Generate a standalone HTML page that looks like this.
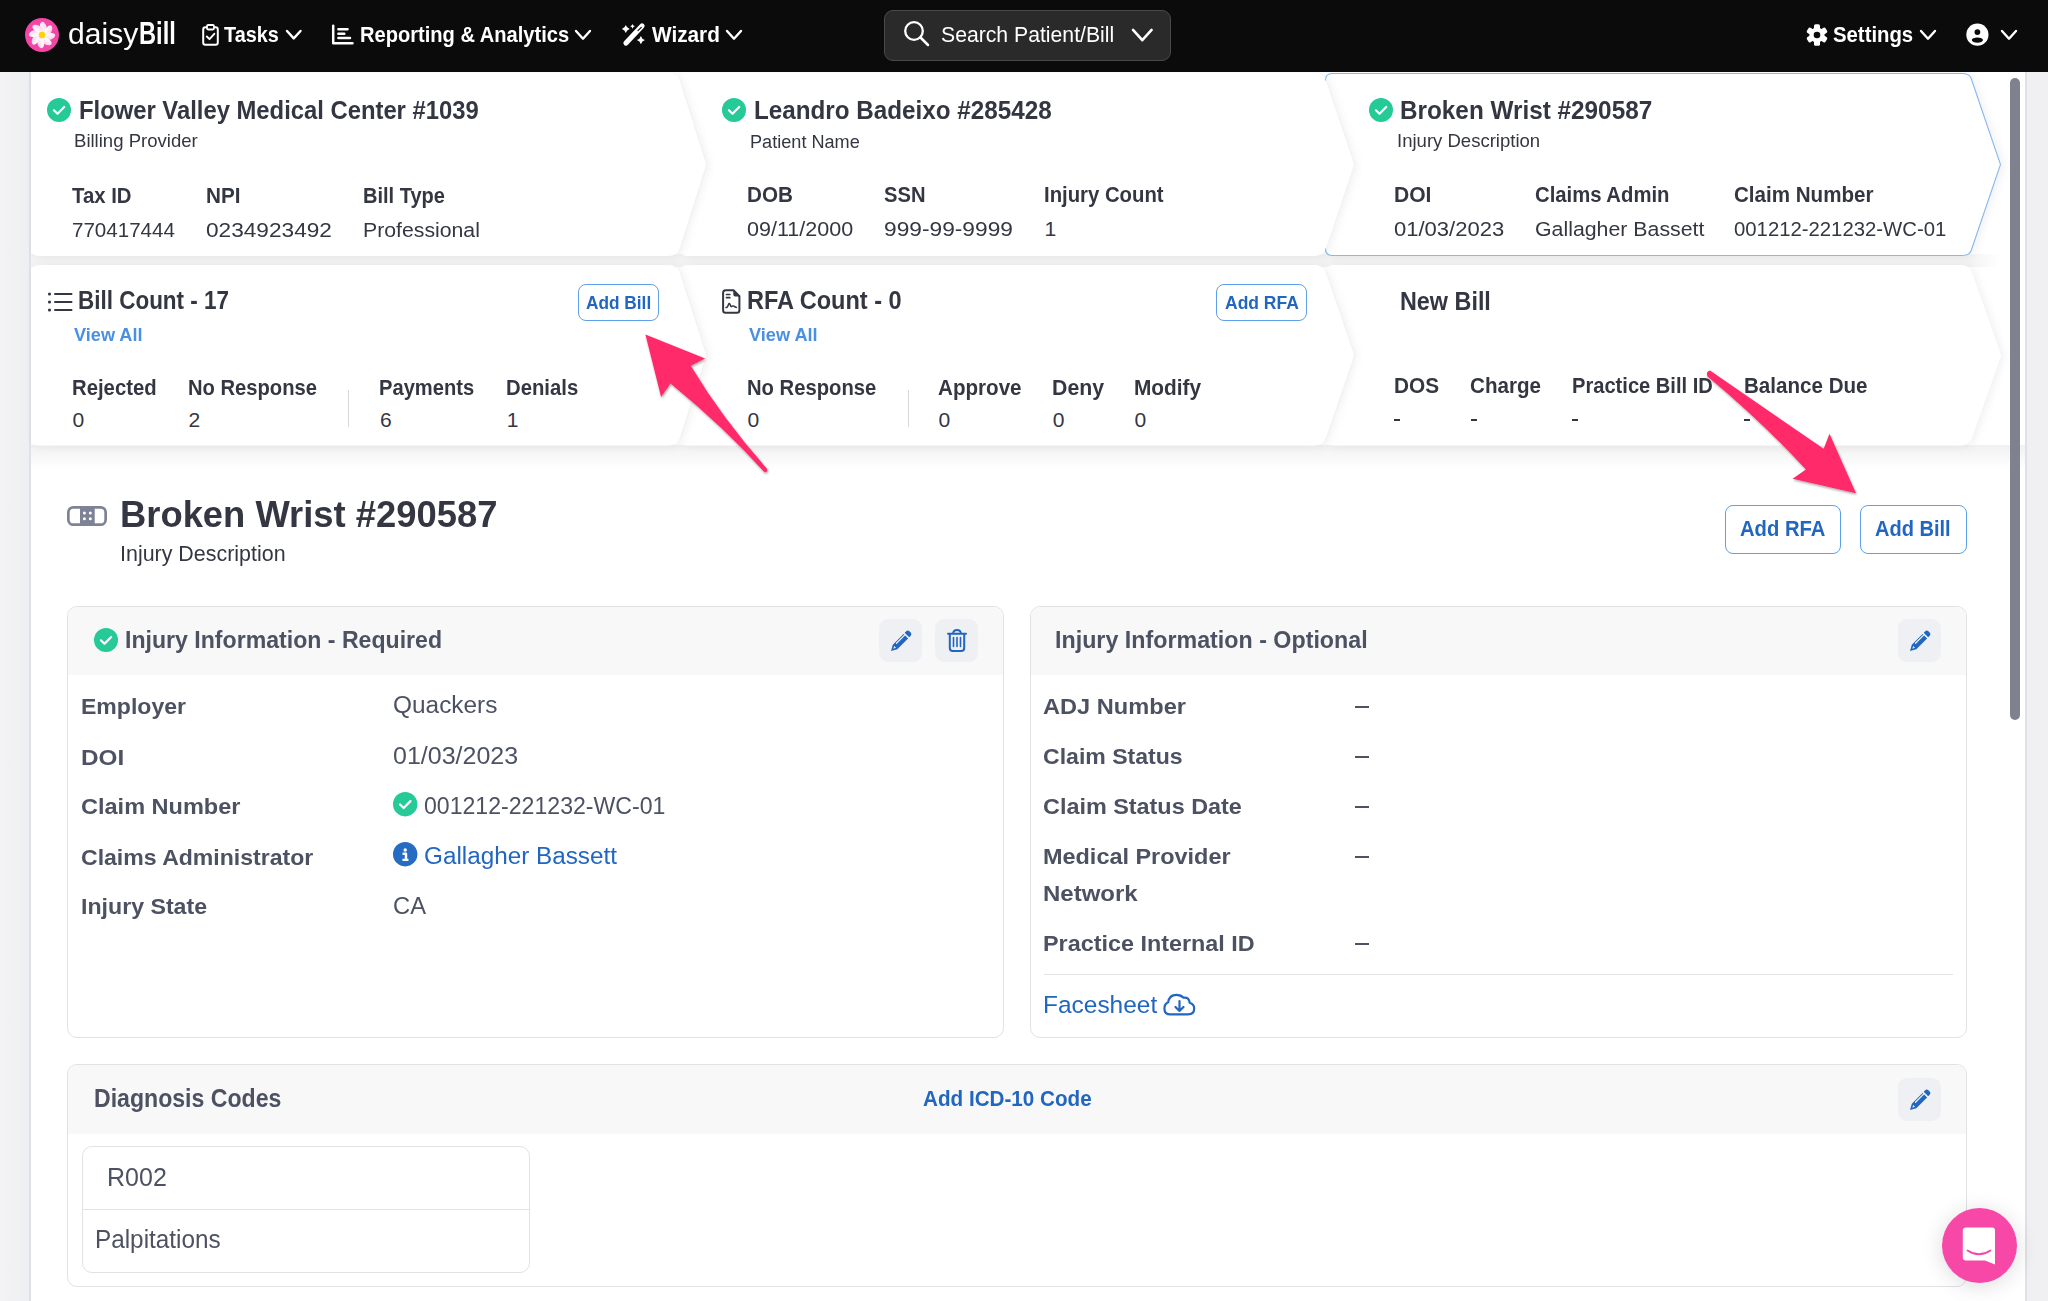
<!DOCTYPE html>
<html><head><meta charset="utf-8"><title>daisyBill</title>
<style>
html,body{margin:0;padding:0;}
body{width:2048px;height:1301px;position:relative;overflow:hidden;background:#fff;font-family:"Liberation Sans",sans-serif;}
.t{position:absolute;white-space:nowrap;}
.abs{position:absolute;}
svg{position:absolute;overflow:visible;}
</style></head><body>

<div class="abs" style="left:0;top:72px;width:29px;height:1229px;background:linear-gradient(90deg,#f3f3f5,#eeeff2)"></div>
<div class="abs" style="left:29px;top:72px;width:1.5px;height:1229px;background:#e0e1e6"></div>
<div class="abs" style="left:2025px;top:72px;width:1.5px;height:1229px;background:#e0e1e6"></div>
<div class="abs" style="left:2026.5px;top:72px;width:22px;height:1229px;background:#f0f0f3"></div>
<svg class="abs" style="left:0;top:0" width="2048" height="500" viewBox="0 0 2048 500">
<defs><filter id="sh" x="-5%" y="-20%" width="110%" height="140%"><feDropShadow dx="3" dy="1" stdDeviation="4" flood-color="#000" flood-opacity="0.06"/></filter>
<linearGradient id="bgr" x1="0" y1="0" x2="1" y2="0"><stop offset="0" stop-color="#f3f3f3"/><stop offset="1" stop-color="#ffffff"/></linearGradient><linearGradient id="bg2" x1="0" y1="0" x2="0" y2="1"><stop offset="0" stop-color="#f1f1f1"/><stop offset="1" stop-color="#ffffff"/></linearGradient></defs>
<rect x="31" y="254" width="1940" height="13" fill="#f3f3f3"/><rect x="1970" y="254" width="30" height="13" fill="url(#bgr)"/>
<rect x="31" y="445" width="1994" height="24" fill="url(#bg2)"/>
<path d="M1327.89,81.52 Q1325.00,73.00 1334.00,73.00 L1960.00,73.00 Q1969.00,73.00 1971.97,81.50 L2000.01,161.67 Q2001.00,164.50 2000.01,167.33 L1971.97,247.50 Q1969.00,256.00 1960.00,256.00 L1334.00,256.00 Q1325.00,256.00 1327.89,247.48 L1355.04,167.34 Q1356.00,164.50 1355.04,161.66 Z" fill="#fff" filter="url(#sh)"/>
<path d="M681.72,81.58 Q679.00,73.00 688.00,73.00 L1314.00,73.00 Q1323.00,73.00 1325.89,81.52 L1353.04,161.66 Q1354.00,164.50 1353.04,167.34 L1325.89,247.48 Q1323.00,256.00 1314.00,256.00 L688.00,256.00 Q679.00,256.00 681.72,247.42 L707.09,167.36 Q708.00,164.50 707.09,161.64 Z" fill="#fff" filter="url(#sh)"/>
<path d="M31.00,82.00 Q31.00,73.00 40.00,73.00 L668.00,73.00 Q677.00,73.00 679.72,81.58 L705.09,161.64 Q706.00,164.50 705.09,167.36 L679.72,247.42 Q677.00,256.00 668.00,256.00 L40.00,256.00 Q31.00,256.00 31.00,247.00 Z" fill="#fff" filter="url(#sh)"/>
<path d="M1327.92,273.51 Q1325.00,265.00 1334.00,265.00 L1960.00,265.00 Q1969.00,265.00 1972.01,273.48 L2000.00,352.42 Q2001.00,355.25 2000.00,358.08 L1972.01,437.02 Q1969.00,445.50 1960.00,445.50 L1334.00,445.50 Q1325.00,445.50 1327.92,436.99 L1355.03,358.09 Q1356.00,355.25 1355.03,352.41 Z" fill="#fff" filter="url(#sh)"/>
<path d="M681.75,273.57 Q679.00,265.00 688.00,265.00 L1314.00,265.00 Q1323.00,265.00 1325.92,273.51 L1353.03,352.41 Q1354.00,355.25 1353.03,358.09 L1325.92,436.99 Q1323.00,445.50 1314.00,445.50 L688.00,445.50 Q679.00,445.50 681.75,436.93 L707.08,358.11 Q708.00,355.25 707.08,352.39 Z" fill="#fff" filter="url(#sh)"/>
<path d="M31.00,274.00 Q31.00,265.00 40.00,265.00 L668.00,265.00 Q677.00,265.00 679.75,273.57 L705.08,352.39 Q706.00,355.25 705.08,358.11 L679.75,436.93 Q677.00,445.50 668.00,445.50 L40.00,445.50 Q31.00,445.50 31.00,436.50 Z" fill="#fff" filter="url(#sh)"/>
<path d="M1325.5,80.5 Q1325.5,73.5 1332,73.5 L1962,73.5 Q1969,73.5 1971,78 L1999.8,162.5 Q2001,164.5 1999.8,166.5 L1971,251 Q1969,255.5 1962,255.5 L1332,255.5 Q1325.5,255.5 1325.5,248.5" fill="none" stroke="#86b8ee" stroke-width="1.1"/>
</svg>
<div class="abs" style="left:2010px;top:78px;width:10px;height:642px;border-radius:5px;background:#7f828e"></div>
<div class="abs" style="left:0;top:0;width:2048px;height:72px;background:#0b0b0b"></div>
<div class="t" style="left:68.4px;top:19.6px;font-size:29.07px;line-height:29.07px;font-weight:400;color:#ffffff;transform:scaleX(1.0347);transform-origin:0 0;">daisy</div>
<div class="t" style="left:138.8px;top:19.0px;font-size:30.81px;line-height:30.81px;font-weight:700;color:#ffffff;transform:scaleX(0.7675);transform-origin:0 0;">Bill</div>
<div class="t" style="left:224.4px;top:23.9px;font-size:21.80px;line-height:21.80px;font-weight:700;color:#ffffff;transform:scaleX(0.9087);transform-origin:0 0;">Tasks</div>
<div class="t" style="left:359.7px;top:23.9px;font-size:21.80px;line-height:21.80px;font-weight:700;color:#ffffff;transform:scaleX(0.9218);transform-origin:0 0;">Reporting &amp; Analytics</div>
<div class="t" style="left:652.1px;top:23.9px;font-size:21.80px;line-height:21.80px;font-weight:700;color:#ffffff;transform:scaleX(0.9527);transform-origin:0 0;">Wizard</div>
<div class="t" style="left:1833.4px;top:23.9px;font-size:21.80px;line-height:21.80px;font-weight:700;color:#ffffff;transform:scaleX(0.9324);transform-origin:0 0;">Settings</div>

<div class="abs" style="left:884px;top:9.5px;width:285px;height:49px;border:1px solid #4a4a4a;border-radius:9px;background:#2a2a2a"></div>
<div class="t" style="left:941.0px;top:23.8px;font-size:22.09px;line-height:22.09px;font-weight:400;color:#ffffff;transform:scaleX(0.9600);transform-origin:0 0;">Search Patient/Bill</div>

<svg style="left:285px;top:28.7875px" width="17.5" height="11.425" viewBox="-2 -2 17.5 11.425"><path d="M0,0 L6.75,7.425000000000001 L13.5,0" fill="none" stroke="#ffffff" stroke-width="2.4" stroke-linecap="round" stroke-linejoin="round"/></svg>
<svg style="left:574px;top:28.65px" width="18" height="11.700000000000001" viewBox="-2 -2 18 11.700000000000001"><path d="M0,0 L7.0,7.700000000000001 L14,0" fill="none" stroke="#ffffff" stroke-width="2.4" stroke-linecap="round" stroke-linejoin="round"/></svg>
<svg style="left:725.4px;top:28.65px" width="18.0" height="11.700000000000001" viewBox="-2 -2 18.0 11.700000000000001"><path d="M0,0 L7.0,7.700000000000001 L14.0,0" fill="none" stroke="#ffffff" stroke-width="2.4" stroke-linecap="round" stroke-linejoin="round"/></svg>
<svg style="left:1131px;top:27.685000000000024px" width="22.59999999999991" height="14.22999999999995" viewBox="-2 -2 22.59999999999991 14.22999999999995"><path d="M0,0 L9.299999999999955,10.22999999999995 L18.59999999999991,0" fill="none" stroke="#ffffff" stroke-width="2.6" stroke-linecap="round" stroke-linejoin="round"/></svg>
<svg style="left:1919px;top:28.65px" width="18" height="11.700000000000001" viewBox="-2 -2 18 11.700000000000001"><path d="M0,0 L7.0,7.700000000000001 L14,0" fill="none" stroke="#ffffff" stroke-width="2.4" stroke-linecap="round" stroke-linejoin="round"/></svg>
<svg style="left:2000px;top:28.65px" width="18" height="11.700000000000001" viewBox="-2 -2 18 11.700000000000001"><path d="M0,0 L7.0,7.700000000000001 L14,0" fill="none" stroke="#ffffff" stroke-width="2.4" stroke-linecap="round" stroke-linejoin="round"/></svg>
<svg style="left:25px;top:18px" width="34" height="34" viewBox="0 0 34 34">
<defs><linearGradient id="pet" x1="0" y1="0" x2="1" y2="0"><stop offset="0" stop-color="#fff"/><stop offset="1" stop-color="#fbd3ea"/></linearGradient></defs>
<circle cx="17" cy="17" r="17" fill="#f346a5"/>
<g transform="translate(17,17)">
<ellipse cx="1.6" cy="-7.4" rx="3.2" ry="6" fill="url(#pet)" transform="rotate(0) rotate(-18 1.6 -7.4)"/><ellipse cx="1.6" cy="-7.4" rx="3.2" ry="6" fill="url(#pet)" transform="rotate(45) rotate(-18 1.6 -7.4)"/><ellipse cx="1.6" cy="-7.4" rx="3.2" ry="6" fill="url(#pet)" transform="rotate(90) rotate(-18 1.6 -7.4)"/><ellipse cx="1.6" cy="-7.4" rx="3.2" ry="6" fill="url(#pet)" transform="rotate(135) rotate(-18 1.6 -7.4)"/><ellipse cx="1.6" cy="-7.4" rx="3.2" ry="6" fill="url(#pet)" transform="rotate(180) rotate(-18 1.6 -7.4)"/><ellipse cx="1.6" cy="-7.4" rx="3.2" ry="6" fill="url(#pet)" transform="rotate(225) rotate(-18 1.6 -7.4)"/><ellipse cx="1.6" cy="-7.4" rx="3.2" ry="6" fill="url(#pet)" transform="rotate(270) rotate(-18 1.6 -7.4)"/><ellipse cx="1.6" cy="-7.4" rx="3.2" ry="6" fill="url(#pet)" transform="rotate(315) rotate(-18 1.6 -7.4)"/>
</g>
<circle cx="17" cy="17" r="3.2" fill="#ffd400"/>
</svg>
<svg style="left:202px;top:24px" width="17" height="22" viewBox="0 0 17 22">
<rect x="1.2" y="3.2" width="14.6" height="17.6" rx="2.2" fill="none" stroke="#fff" stroke-width="2"/>
<rect x="5" y="1" width="7" height="4.5" rx="1.2" fill="#0b0b0b" stroke="#fff" stroke-width="1.8"/>
<path d="M4.8,12.5 L7.5,15.2 L12.3,9.8" fill="none" stroke="#fff" stroke-width="1.9" stroke-linecap="round" stroke-linejoin="round"/>
</svg>
<svg style="left:331px;top:24px" width="23" height="21" viewBox="0 0 23 21">
<path d="M2.2,1.8 V19.2 H21.5" fill="none" stroke="#fff" stroke-width="2.5" stroke-linecap="round" stroke-linejoin="round"/>
<path d="M7.4,5.3 H16.5 M7.4,9.7 H13.3 M7.4,13.9 H19" fill="none" stroke="#fff" stroke-width="2.5" stroke-linecap="round"/>
</svg>
<svg style="left:621px;top:23px" width="25" height="23" viewBox="0 0 25 23">
<path d="M5,20 L21,3" fill="none" stroke="#fff" stroke-width="5.2" stroke-linecap="round"/>
<path d="M17,7.7 L20.3,4.3" stroke="#0b0b0b" stroke-width="1.1" stroke-linecap="round"/>
<path d="M4.8,2.1 Q5.6579999999999995,5.142 8.7,6 Q5.6579999999999995,6.858 4.8,9.9 Q3.9419999999999997,6.858 0.8999999999999999,6 Q3.9419999999999997,5.142 4.8,2.1 Z M11.5,0.8999999999999999 Q12.028,2.772 13.9,3.3 Q12.028,3.828 11.5,5.699999999999999 Q10.972,3.828 9.1,3.3 Q10.972,2.772 11.5,0.8999999999999999 Z M19.9,13.000000000000002 Q20.802,16.198 24.0,17.1 Q20.802,18.002000000000002 19.9,21.200000000000003 Q18.997999999999998,18.002000000000002 15.799999999999999,17.1 Q18.997999999999998,16.198 19.9,13.000000000000002 Z" fill="#fff"/>
</svg>
<svg style="left:903px;top:20px" width="28" height="28" viewBox="0 0 28 28">
<circle cx="11" cy="11" r="8.8" fill="none" stroke="#fff" stroke-width="2.3"/>
<path d="M17.5,17.5 L25,25" stroke="#fff" stroke-width="2.5" stroke-linecap="round"/>
</svg>
<svg style="left:1806px;top:23.5px" width="22" height="22" viewBox="0 0 22 22">
<g transform="translate(11,11)" fill="#fff">
<circle r="7.6"/>
<rect x="-3" y="-10.8" width="6" height="6" rx="1.6" transform="rotate(0)"/><rect x="-3" y="-10.8" width="6" height="6" rx="1.6" transform="rotate(60)"/><rect x="-3" y="-10.8" width="6" height="6" rx="1.6" transform="rotate(120)"/><rect x="-3" y="-10.8" width="6" height="6" rx="1.6" transform="rotate(180)"/><rect x="-3" y="-10.8" width="6" height="6" rx="1.6" transform="rotate(240)"/><rect x="-3" y="-10.8" width="6" height="6" rx="1.6" transform="rotate(300)"/>
</g>
<circle cx="11" cy="11" r="3.3" fill="#0b0b0b"/>
</svg>
<svg style="left:1966px;top:23px" width="23" height="23" viewBox="0 0 23 23">
<circle cx="11.4" cy="11.7" r="11.1" fill="#fff"/>
<circle cx="11.4" cy="9.1" r="2.9" fill="#0b0b0b"/>
<ellipse cx="11.4" cy="17.1" rx="5.6" ry="2.7" fill="#0b0b0b"/>
</svg>
<svg style="left:47.2px;top:98.0px" width="24" height="24" viewBox="0 0 24 24"><circle cx="12" cy="12" r="12" fill="#25ca97"/><path d="M6.9,12.3 L10.5,15.7 L17.2,9" fill="none" stroke="#fff" stroke-width="2.2" stroke-linecap="round" stroke-linejoin="round"/></svg>
<svg style="left:722.2px;top:98.3px" width="24" height="24" viewBox="0 0 24 24"><circle cx="12" cy="12" r="12" fill="#25ca97"/><path d="M6.9,12.3 L10.5,15.7 L17.2,9" fill="none" stroke="#fff" stroke-width="2.2" stroke-linecap="round" stroke-linejoin="round"/></svg>
<svg style="left:1369.2px;top:98.3px" width="24" height="24" viewBox="0 0 24 24"><circle cx="12" cy="12" r="12" fill="#25ca97"/><path d="M6.9,12.3 L10.5,15.7 L17.2,9" fill="none" stroke="#fff" stroke-width="2.2" stroke-linecap="round" stroke-linejoin="round"/></svg>
<div class="t" style="left:78.7px;top:99.0px;font-size:24.85px;line-height:24.85px;font-weight:700;color:#343742;transform:scaleX(0.9585);transform-origin:0 0;">Flower Valley Medical Center #1039</div>
<div class="t" style="left:74.3px;top:132.7px;font-size:17.88px;line-height:17.88px;font-weight:400;color:#343742;transform:scaleX(1.0390);transform-origin:0 0;">Billing Provider</div>
<div class="t" style="left:72.0px;top:185.8px;font-size:21.51px;line-height:21.51px;font-weight:700;color:#343742;transform:scaleX(0.9466);transform-origin:0 0;">Tax ID</div>
<div class="t" style="left:205.6px;top:185.8px;font-size:21.51px;line-height:21.51px;font-weight:700;color:#343742;transform:scaleX(0.9621);transform-origin:0 0;">NPI</div>
<div class="t" style="left:362.9px;top:185.8px;font-size:21.51px;line-height:21.51px;font-weight:700;color:#343742;transform:scaleX(0.9313);transform-origin:0 0;">Bill Type</div>
<div class="t" style="left:72.0px;top:218.5px;font-size:21.08px;line-height:21.08px;font-weight:400;color:#343742;transform:scaleX(0.9755);transform-origin:0 0;">770417444</div>
<div class="t" style="left:205.6px;top:218.5px;font-size:21.08px;line-height:21.08px;font-weight:400;color:#343742;transform:scaleX(1.0740);transform-origin:0 0;">0234923492</div>
<div class="t" style="left:362.8px;top:218.5px;font-size:21.08px;line-height:21.08px;font-weight:400;color:#343742;transform:scaleX(1.0079);transform-origin:0 0;">Professional</div>
<div class="t" style="left:753.6px;top:98.6px;font-size:24.85px;line-height:24.85px;font-weight:700;color:#343742;transform:scaleX(0.9754);transform-origin:0 0;">Leandro Badeixo #285428</div>
<div class="t" style="left:749.9px;top:133.5px;font-size:17.88px;line-height:17.88px;font-weight:400;color:#343742;transform:scaleX(1.0146);transform-origin:0 0;">Patient Name</div>
<div class="t" style="left:747.0px;top:185.4px;font-size:21.51px;line-height:21.51px;font-weight:700;color:#343742;transform:scaleX(0.9603);transform-origin:0 0;">DOB</div>
<div class="t" style="left:884.2px;top:185.4px;font-size:21.51px;line-height:21.51px;font-weight:700;color:#343742;transform:scaleX(0.9383);transform-origin:0 0;">SSN</div>
<div class="t" style="left:1044.1px;top:185.4px;font-size:21.51px;line-height:21.51px;font-weight:700;color:#343742;transform:scaleX(0.9443);transform-origin:0 0;">Injury Count</div>
<div class="t" style="left:747.0px;top:218.0px;font-size:21.08px;line-height:21.08px;font-weight:400;color:#343742;transform:scaleX(1.0219);transform-origin:0 0;">09/11/2000</div>
<div class="t" style="left:884.2px;top:218.0px;font-size:21.08px;line-height:21.08px;font-weight:400;color:#343742;transform:scaleX(1.0785);transform-origin:0 0;">999-99-9999</div>
<div class="t" style="left:1044.5px;top:218.0px;font-size:21.08px;line-height:21.08px;font-weight:400;color:#343742;">1</div>
<div class="t" style="left:1399.8px;top:98.6px;font-size:24.85px;line-height:24.85px;font-weight:700;color:#343742;transform:scaleX(0.9783);transform-origin:0 0;">Broken Wrist #290587</div>
<div class="t" style="left:1396.6px;top:133.1px;font-size:17.88px;line-height:17.88px;font-weight:400;color:#343742;transform:scaleX(1.0376);transform-origin:0 0;">Injury Description</div>
<div class="t" style="left:1394.0px;top:185.4px;font-size:21.51px;line-height:21.51px;font-weight:700;color:#343742;transform:scaleX(0.9805);transform-origin:0 0;">DOI</div>
<div class="t" style="left:1534.6px;top:185.4px;font-size:21.51px;line-height:21.51px;font-weight:700;color:#343742;transform:scaleX(0.9429);transform-origin:0 0;">Claims Admin</div>
<div class="t" style="left:1734.4px;top:185.4px;font-size:21.51px;line-height:21.51px;font-weight:700;color:#343742;transform:scaleX(0.9566);transform-origin:0 0;">Claim Number</div>
<div class="t" style="left:1394.0px;top:218.0px;font-size:21.08px;line-height:21.08px;font-weight:400;color:#343742;transform:scaleX(1.0447);transform-origin:0 0;">01/03/2023</div>
<div class="t" style="left:1534.6px;top:218.0px;font-size:21.08px;line-height:21.08px;font-weight:400;color:#343742;transform:scaleX(1.0112);transform-origin:0 0;">Gallagher Bassett</div>
<div class="t" style="left:1734.4px;top:218.0px;font-size:21.08px;line-height:21.08px;font-weight:400;color:#343742;transform:scaleX(0.9634);transform-origin:0 0;">001212-221232-WC-01</div>

<svg style="left:47px;top:291px" width="26" height="22" viewBox="0 0 26 22">
<g fill="#343742"><circle cx="2.5" cy="3" r="1.6"/><circle cx="2.5" cy="11" r="1.6"/><circle cx="2.5" cy="19" r="1.6"/></g>
<path d="M8,3 H24.5 M8,11 H24.5 M8,19 H24.5" stroke="#343742" stroke-width="2" stroke-linecap="round"/>
</svg>
<div class="abs" style="left:577.5px;top:284px;width:79.5px;height:34.5px;border:1.5px solid #5e9fea;border-radius:8px"></div>
<div class="abs" style="left:348px;top:390px;width:1px;height:37px;background:#d5d6da"></div>
<svg style="left:720px;top:289px" width="22" height="26" viewBox="0 0 22 26">
<path d="M5.6,1.3 H13.5 L19.4,7.2 V21.3 Q19.4,23.8 16.9,23.8 H5.6 Q3.1,23.8 3.1,21.3 V3.8 Q3.1,1.3 5.6,1.3 Z" fill="none" stroke="#343742" stroke-width="2"/>
<path d="M13.3,1.3 L19.6,7.6 H15.3 Q13.3,7.6 13.3,5.6 Z" fill="#343742"/>
<path d="M6.5,5.5 H9.8 M6.5,8.7 H9.8" stroke="#343742" stroke-width="1.7" stroke-linecap="round"/>
<path d="M6,18.6 Q7.5,18.6 8.5,15.5 Q9.3,13.2 10.2,15.6 Q10.8,18 11.7,17.5 Q12.6,16.5 14,17.2 Q15.2,18.2 16.4,18.4" fill="none" stroke="#343742" stroke-width="1.5" stroke-linecap="round"/>
</svg>
<div class="abs" style="left:1215.5px;top:284px;width:89.5px;height:34.5px;border:1.5px solid #5e9fea;border-radius:8px"></div>
<div class="abs" style="left:907.5px;top:390px;width:1px;height:37px;background:#d5d6da"></div>
<div class="abs" style="left:1394px;top:419px;width:6px;height:2px;background:#343742"></div>
<div class="abs" style="left:1471px;top:419px;width:6px;height:2px;background:#343742"></div>
<div class="abs" style="left:1572px;top:419px;width:6px;height:2px;background:#343742"></div>
<div class="abs" style="left:1744px;top:419px;width:6px;height:2px;background:#343742"></div>
<div class="t" style="left:78.2px;top:289.4px;font-size:24.85px;line-height:24.85px;font-weight:700;color:#343742;transform:scaleX(0.9044);transform-origin:0 0;">Bill Count - 17</div>
<div class="t" style="left:74.4px;top:325.6px;font-size:18.31px;line-height:18.31px;font-weight:700;color:#4a90e2;transform:scaleX(0.9912);transform-origin:0 0;">View All</div>
<div class="t" style="left:586.4px;top:294.4px;font-size:18.60px;line-height:18.60px;font-weight:700;color:#2166c0;transform:scaleX(0.9279);transform-origin:0 0;">Add Bill</div>
<div class="t" style="left:71.9px;top:377.6px;font-size:21.51px;line-height:21.51px;font-weight:700;color:#343742;transform:scaleX(0.9447);transform-origin:0 0;">Rejected</div>
<div class="t" style="left:188.0px;top:377.6px;font-size:21.51px;line-height:21.51px;font-weight:700;color:#343742;transform:scaleX(0.9385);transform-origin:0 0;">No Response</div>
<div class="t" style="left:379.4px;top:377.6px;font-size:21.51px;line-height:21.51px;font-weight:700;color:#343742;transform:scaleX(0.9366);transform-origin:0 0;">Payments</div>
<div class="t" style="left:506.1px;top:377.6px;font-size:21.51px;line-height:21.51px;font-weight:700;color:#343742;transform:scaleX(0.9436);transform-origin:0 0;">Denials</div>
<div class="t" style="left:72.5px;top:408.9px;font-size:21.08px;line-height:21.08px;font-weight:400;color:#343742;">0</div>
<div class="t" style="left:188.6px;top:408.9px;font-size:21.08px;line-height:21.08px;font-weight:400;color:#343742;">2</div>
<div class="t" style="left:380.0px;top:408.9px;font-size:21.08px;line-height:21.08px;font-weight:400;color:#343742;">6</div>
<div class="t" style="left:506.7px;top:408.9px;font-size:21.08px;line-height:21.08px;font-weight:400;color:#343742;">1</div>
<div class="t" style="left:747.2px;top:289.4px;font-size:24.85px;line-height:24.85px;font-weight:700;color:#343742;transform:scaleX(0.9469);transform-origin:0 0;">RFA Count - 0</div>
<div class="t" style="left:749.4px;top:325.6px;font-size:18.31px;line-height:18.31px;font-weight:700;color:#4a90e2;transform:scaleX(0.9927);transform-origin:0 0;">View All</div>
<div class="t" style="left:1224.7px;top:294.4px;font-size:18.60px;line-height:18.60px;font-weight:700;color:#2166c0;transform:scaleX(0.9408);transform-origin:0 0;">Add RFA</div>
<div class="t" style="left:746.9px;top:377.6px;font-size:21.51px;line-height:21.51px;font-weight:700;color:#343742;transform:scaleX(0.9406);transform-origin:0 0;">No Response</div>
<div class="t" style="left:938.0px;top:377.6px;font-size:21.51px;line-height:21.51px;font-weight:700;color:#343742;transform:scaleX(0.9582);transform-origin:0 0;">Approve</div>
<div class="t" style="left:1052.1px;top:377.6px;font-size:21.51px;line-height:21.51px;font-weight:700;color:#343742;transform:scaleX(0.9906);transform-origin:0 0;">Deny</div>
<div class="t" style="left:1133.9px;top:377.6px;font-size:21.51px;line-height:21.51px;font-weight:700;color:#343742;transform:scaleX(0.9696);transform-origin:0 0;">Modify</div>
<div class="t" style="left:747.5px;top:408.9px;font-size:21.08px;line-height:21.08px;font-weight:400;color:#343742;">0</div>
<div class="t" style="left:938.6px;top:408.9px;font-size:21.08px;line-height:21.08px;font-weight:400;color:#343742;">0</div>
<div class="t" style="left:1052.7px;top:408.9px;font-size:21.08px;line-height:21.08px;font-weight:400;color:#343742;">0</div>
<div class="t" style="left:1134.5px;top:408.9px;font-size:21.08px;line-height:21.08px;font-weight:400;color:#343742;">0</div>
<div class="t" style="left:1400.2px;top:289.5px;font-size:24.85px;line-height:24.85px;font-weight:700;color:#343742;transform:scaleX(0.9402);transform-origin:0 0;">New Bill</div>
<div class="t" style="left:1393.9px;top:375.6px;font-size:21.51px;line-height:21.51px;font-weight:700;color:#343742;transform:scaleX(0.9675);transform-origin:0 0;">DOS</div>
<div class="t" style="left:1470.1px;top:375.6px;font-size:21.51px;line-height:21.51px;font-weight:700;color:#343742;transform:scaleX(0.9581);transform-origin:0 0;">Charge</div>
<div class="t" style="left:1571.6px;top:375.6px;font-size:21.51px;line-height:21.51px;font-weight:700;color:#343742;transform:scaleX(0.9353);transform-origin:0 0;">Practice Bill ID</div>
<div class="t" style="left:1743.8px;top:375.6px;font-size:21.51px;line-height:21.51px;font-weight:700;color:#343742;transform:scaleX(0.9573);transform-origin:0 0;">Balance Due</div>

<svg style="left:67px;top:506px" width="40" height="20" viewBox="0 0 40 20">
<rect x="1.35" y="1.35" width="37.3" height="17.3" rx="5" fill="none" stroke="#7d8296" stroke-width="2.7"/>
<rect x="13" y="0" width="14.7" height="20" fill="#7d8296"/>
<g fill="#fff"><circle cx="17.4" cy="6.9" r="1.5"/><circle cx="23.3" cy="6.9" r="1.5"/><circle cx="17.4" cy="12.7" r="1.5"/><circle cx="23.3" cy="12.7" r="1.5"/></g>
</svg>
<div class="abs" style="left:1724.5px;top:504.5px;width:114px;height:47px;border:1.6px solid #5e9fea;border-radius:8px"></div>
<div class="abs" style="left:1860px;top:504.5px;width:104.5px;height:47px;border:1.6px solid #5e9fea;border-radius:8px"></div>
<div class="t" style="left:120.0px;top:496.1px;font-size:37.79px;line-height:37.79px;font-weight:700;color:#343742;transform:scaleX(0.9627);transform-origin:0 0;">Broken Wrist #290587</div>
<div class="t" style="left:119.6px;top:543.0px;font-size:21.22px;line-height:21.22px;font-weight:400;color:#343742;transform:scaleX(1.0102);transform-origin:0 0;">Injury Description</div>
<div class="t" style="left:1740.1px;top:519.3px;font-size:21.37px;line-height:21.37px;font-weight:700;color:#2166c0;transform:scaleX(0.9467);transform-origin:0 0;">Add RFA</div>
<div class="t" style="left:1875.0px;top:519.3px;font-size:21.37px;line-height:21.37px;font-weight:700;color:#2166c0;transform:scaleX(0.9368);transform-origin:0 0;">Add Bill</div>

<div class="abs" style="left:67px;top:605.5px;width:937px;height:432.0px;box-sizing:border-box;border:1.3px solid #e1e2e6;border-radius:10px;background:#fff;overflow:hidden"><div style="position:absolute;left:0;top:0;right:0;height:68.5px;background:#f8f8f9"></div></div>
<div class="abs" style="left:1030px;top:605.5px;width:937px;height:432.0px;box-sizing:border-box;border:1.3px solid #e1e2e6;border-radius:10px;background:#fff;overflow:hidden"><div style="position:absolute;left:0;top:0;right:0;height:68.5px;background:#f8f8f9"></div></div>
<div class="abs" style="left:67px;top:1064px;width:1900px;height:223px;box-sizing:border-box;border:1.3px solid #e1e2e6;border-radius:10px;background:#fff;overflow:hidden"><div style="position:absolute;left:0;top:0;right:0;height:69px;background:#f8f8f9"></div></div>
<div class="abs" style="left:879px;top:619px;width:43px;height:43px;border-radius:9px;background:#eff0f3"></div>
<div class="abs" style="left:935px;top:619px;width:43px;height:43px;border-radius:9px;background:#eff0f3"></div>
<svg style="left:890px;top:629px" width="23" height="23" viewBox="0 0 23 23">
<path d="M16.2,2.3 Q17.8,0.7 19.4,2.3 L20.7,3.6 Q22.3,5.2 20.7,6.8 L19.2,8.3 L14.7,3.8 Z" fill="#2166c0"/>
<path d="M13.6,4.9 L18.1,9.4 L7.3,20.2 L1,22 L2.8,15.7 Z" fill="#2166c0"/>
<path d="M4.2,17 L3.3,19.7 L6,18.8 Z" fill="#eff0f3"/>
<path d="M6.5,14.2 L14.6,6.1" stroke="#eff0f3" stroke-width="1.3" stroke-linecap="round"/>
</svg>
<svg style="left:947px;top:629px" width="20" height="23" viewBox="0 0 20 23">
<path d="M1,4.8 H19" stroke="#2166c0" stroke-width="2" stroke-linecap="round"/>
<path d="M6,4.5 Q6.5,1 10,1 Q13.5,1 14,4.5" fill="none" stroke="#2166c0" stroke-width="1.9"/>
<path d="M2.8,5 V19 Q2.8,22 5.8,22 H14.2 Q17.2,22 17.2,19 V5" fill="none" stroke="#2166c0" stroke-width="2"/>
<path d="M6.5,8.5 V17.5 M10,8.5 V17.5 M13.5,8.5 V17.5" stroke="#2166c0" stroke-width="1.6" stroke-linecap="round"/>
</svg>
<svg style="left:94.0px;top:627.5px" width="24" height="24" viewBox="0 0 24 24"><circle cx="12" cy="12" r="12" fill="#25ca97"/><path d="M6.9,12.3 L10.5,15.7 L17.2,9" fill="none" stroke="#fff" stroke-width="2.2" stroke-linecap="round" stroke-linejoin="round"/></svg>
<svg style="left:392.8px;top:791.9px" width="24.4" height="24.4" viewBox="0 0 24 24"><circle cx="12" cy="12" r="12" fill="#25ca97"/><path d="M6.9,12.3 L10.5,15.7 L17.2,9" fill="none" stroke="#fff" stroke-width="2.2" stroke-linecap="round" stroke-linejoin="round"/></svg>
<svg style="left:392.8px;top:841.9px" width="24.4" height="24.4" viewBox="0 0 24 24"><circle cx="12" cy="12" r="12" fill="#256cc2"/><circle cx="12" cy="7.9" r="1.7" fill="#fff"/><path d="M9.4,11.6 H12.8 V17.4 M9.3,17.6 H15.2" fill="none" stroke="#fff" stroke-width="2.4" stroke-linejoin="round"/></svg>
<div class="abs" style="left:1897.5px;top:619px;width:43px;height:43px;border-radius:9px;background:#eff0f3"></div>
<svg style="left:1908.5px;top:629px" width="23" height="23" viewBox="0 0 23 23">
<path d="M16.2,2.3 Q17.8,0.7 19.4,2.3 L20.7,3.6 Q22.3,5.2 20.7,6.8 L19.2,8.3 L14.7,3.8 Z" fill="#2166c0"/>
<path d="M13.6,4.9 L18.1,9.4 L7.3,20.2 L1,22 L2.8,15.7 Z" fill="#2166c0"/>
<path d="M4.2,17 L3.3,19.7 L6,18.8 Z" fill="#eff0f3"/>
<path d="M6.5,14.2 L14.6,6.1" stroke="#eff0f3" stroke-width="1.3" stroke-linecap="round"/>
</svg>
<div class="abs" style="left:1355px;top:706px;width:14px;height:2px;background:#4d5263"></div>
<div class="abs" style="left:1355px;top:756px;width:14px;height:2px;background:#4d5263"></div>
<div class="abs" style="left:1355px;top:806px;width:14px;height:2px;background:#4d5263"></div>
<div class="abs" style="left:1355px;top:856px;width:14px;height:2px;background:#4d5263"></div>
<div class="abs" style="left:1355px;top:943px;width:14px;height:2px;background:#4d5263"></div>
<div class="abs" style="left:1043.5px;top:974px;width:909.5px;height:1.3px;background:#e1e2e6"></div>
<svg style="left:1163px;top:993px" width="33" height="24" viewBox="0 0 33 24">
<path d="M7.5,21.4 H25 Q31.2,21.4 31.2,15.6 Q31.2,11.2 26.6,9.8 Q26.2,3.9 20.6,4.7 Q17.8,1.8 13.4,1.8 Q6.2,1.8 5.2,9.3 Q1.4,11 1.4,15.4 Q1.4,21.4 7.5,21.4 Z" fill="none" stroke="#2166c0" stroke-width="2.2" stroke-linejoin="round"/>
<path d="M16.5,8 V18 M12.5,14 L16.5,18 L20.5,14" fill="none" stroke="#2166c0" stroke-width="2.2" stroke-linecap="round" stroke-linejoin="round"/>
</svg>
<div class="abs" style="left:1897.5px;top:1078px;width:43px;height:43px;border-radius:9px;background:#eff0f3"></div>
<svg style="left:1908.5px;top:1088px" width="23" height="23" viewBox="0 0 23 23">
<path d="M16.2,2.3 Q17.8,0.7 19.4,2.3 L20.7,3.6 Q22.3,5.2 20.7,6.8 L19.2,8.3 L14.7,3.8 Z" fill="#2166c0"/>
<path d="M13.6,4.9 L18.1,9.4 L7.3,20.2 L1,22 L2.8,15.7 Z" fill="#2166c0"/>
<path d="M4.2,17 L3.3,19.7 L6,18.8 Z" fill="#eff0f3"/>
<path d="M6.5,14.2 L14.6,6.1" stroke="#eff0f3" stroke-width="1.3" stroke-linecap="round"/>
</svg>
<div class="abs" style="left:81.5px;top:1146px;width:448.5px;height:127px;box-sizing:border-box;border:1.3px solid #e1e2e6;border-radius:10px;background:#fff"></div>
<div class="abs" style="left:82px;top:1209px;width:447.5px;height:1.3px;background:#e1e2e6"></div>
<div class="t" style="left:125.2px;top:628.3px;font-size:24.56px;line-height:24.56px;font-weight:700;color:#4d5263;transform:scaleX(0.9413);transform-origin:0 0;">Injury Information - Required</div>
<div class="t" style="left:81.4px;top:694.9px;font-size:22.82px;line-height:22.82px;font-weight:700;color:#4d5263;transform:scaleX(1.0097);transform-origin:0 0;">Employer</div>
<div class="t" style="left:81.4px;top:746.2px;font-size:22.82px;line-height:22.82px;font-weight:700;color:#4d5263;transform:scaleX(1.0647);transform-origin:0 0;">DOI</div>
<div class="t" style="left:81.4px;top:795.3px;font-size:22.82px;line-height:22.82px;font-weight:700;color:#4d5263;transform:scaleX(1.0311);transform-origin:0 0;">Claim Number</div>
<div class="t" style="left:81.4px;top:845.9px;font-size:22.82px;line-height:22.82px;font-weight:700;color:#4d5263;transform:scaleX(1.0103);transform-origin:0 0;">Claims Administrator</div>
<div class="t" style="left:81.4px;top:895.3px;font-size:22.82px;line-height:22.82px;font-weight:700;color:#4d5263;transform:scaleX(1.0147);transform-origin:0 0;">Injury State</div>
<div class="t" style="left:393.0px;top:693.1px;font-size:23.98px;line-height:23.98px;font-weight:400;color:#4d5263;transform:scaleX(1.0183);transform-origin:0 0;">Quackers</div>
<div class="t" style="left:393.2px;top:744.4px;font-size:23.98px;line-height:23.98px;font-weight:400;color:#4d5263;transform:scaleX(1.0430);transform-origin:0 0;">01/03/2023</div>
<div class="t" style="left:424.4px;top:793.5px;font-size:23.98px;line-height:23.98px;font-weight:400;color:#4d5263;transform:scaleX(0.9635);transform-origin:0 0;">001212-221232-WC-01</div>
<div class="t" style="left:424.4px;top:844.1px;font-size:23.98px;line-height:23.98px;font-weight:400;color:#2166c0;transform:scaleX(1.0129);transform-origin:0 0;">Gallagher Bassett</div>
<div class="t" style="left:393.2px;top:893.5px;font-size:23.98px;line-height:23.98px;font-weight:400;color:#4d5263;transform:scaleX(0.9906);transform-origin:0 0;">CA</div>
<div class="t" style="left:1054.9px;top:628.3px;font-size:24.56px;line-height:24.56px;font-weight:700;color:#4d5263;transform:scaleX(0.9475);transform-origin:0 0;">Injury Information - Optional</div>
<div class="t" style="left:1042.9px;top:695.1px;font-size:22.82px;line-height:22.82px;font-weight:700;color:#4d5263;transform:scaleX(1.0346);transform-origin:0 0;">ADJ Number</div>
<div class="t" style="left:1042.9px;top:744.9px;font-size:22.82px;line-height:22.82px;font-weight:700;color:#4d5263;transform:scaleX(1.0107);transform-origin:0 0;">Claim Status</div>
<div class="t" style="left:1042.9px;top:794.7px;font-size:22.82px;line-height:22.82px;font-weight:700;color:#4d5263;transform:scaleX(1.0252);transform-origin:0 0;">Claim Status Date</div>
<div class="t" style="left:1042.9px;top:845.3px;font-size:22.82px;line-height:22.82px;font-weight:700;color:#4d5263;transform:scaleX(1.0272);transform-origin:0 0;">Medical Provider</div>
<div class="t" style="left:1042.9px;top:882.2px;font-size:22.82px;line-height:22.82px;font-weight:700;color:#4d5263;transform:scaleX(1.0514);transform-origin:0 0;">Network</div>
<div class="t" style="left:1042.9px;top:932.0px;font-size:22.82px;line-height:22.82px;font-weight:700;color:#4d5263;transform:scaleX(1.0241);transform-origin:0 0;">Practice Internal ID</div>
<div class="t" style="left:1042.9px;top:993.8px;font-size:23.55px;line-height:23.55px;font-weight:400;color:#2166c0;transform:scaleX(1.0388);transform-origin:0 0;">Facesheet</div>
<div class="t" style="left:93.6px;top:1086.7px;font-size:24.85px;line-height:24.85px;font-weight:700;color:#4d5263;transform:scaleX(0.9298);transform-origin:0 0;">Diagnosis Codes</div>
<div class="t" style="left:923.0px;top:1088.3px;font-size:21.95px;line-height:21.95px;font-weight:700;color:#2166c0;transform:scaleX(0.9417);transform-origin:0 0;">Add ICD-10 Code</div>
<div class="t" style="left:107.0px;top:1164.6px;font-size:25.58px;line-height:25.58px;font-weight:400;color:#4d5263;transform:scaleX(0.9777);transform-origin:0 0;">R002</div>
<div class="t" style="left:94.8px;top:1228.2px;font-size:24.85px;line-height:24.85px;font-weight:400;color:#4d5263;transform:scaleX(0.9782);transform-origin:0 0;">Palpitations</div>

<div class="abs" style="left:1942px;top:1208px;width:75px;height:75px;border-radius:50%;background:#f748a8;box-shadow:0 3px 22px rgba(0,0,0,0.14)"></div>
<svg style="left:1962px;top:1227px" width="34" height="38" viewBox="0 0 34 38">
<path d="M4,0.5 H30 Q33,0.5 33,3.5 V37.5 L23,33.5 H4 Q0.8,33.5 0.8,30.5 V3.5 Q0.8,0.5 4,0.5 Z" fill="#fff"/>
<path d="M5.5,23.5 Q17,31 28.5,23.5" fill="none" stroke="#f748a8" stroke-width="1.8" stroke-linecap="round"/>
</svg>
<svg class="abs" style="left:0;top:0" width="2048" height="1301" viewBox="0 0 2048 1301">
<defs><filter id="ash" x="-20%" y="-20%" width="140%" height="140%"><feDropShadow dx="0.8" dy="1.5" stdDeviation="1" flood-color="#000" flood-opacity="0.35"/></filter></defs>
<path d="M645.4,334.4 L705.2,358.6 L690.8,365.8 Q721.7,417.4 766.8,468.6 Q768.5,472.5 764.5,472.2 Q724.4,427.5 670.5,383.4 L661.1,397.1 Z" fill="#fe2c6b" filter="url(#ash)"/>
<path d="M1856,493.2 L1829.5,433.8 L1823.7,448.8 L1710,370.5 Q1705.5,371.5 1707.5,376.5 Q1760,420 1805.9,469.5 L1792.6,478.7 Z" fill="#fe2c6b" filter="url(#ash)"/>
</svg>
</body></html>
